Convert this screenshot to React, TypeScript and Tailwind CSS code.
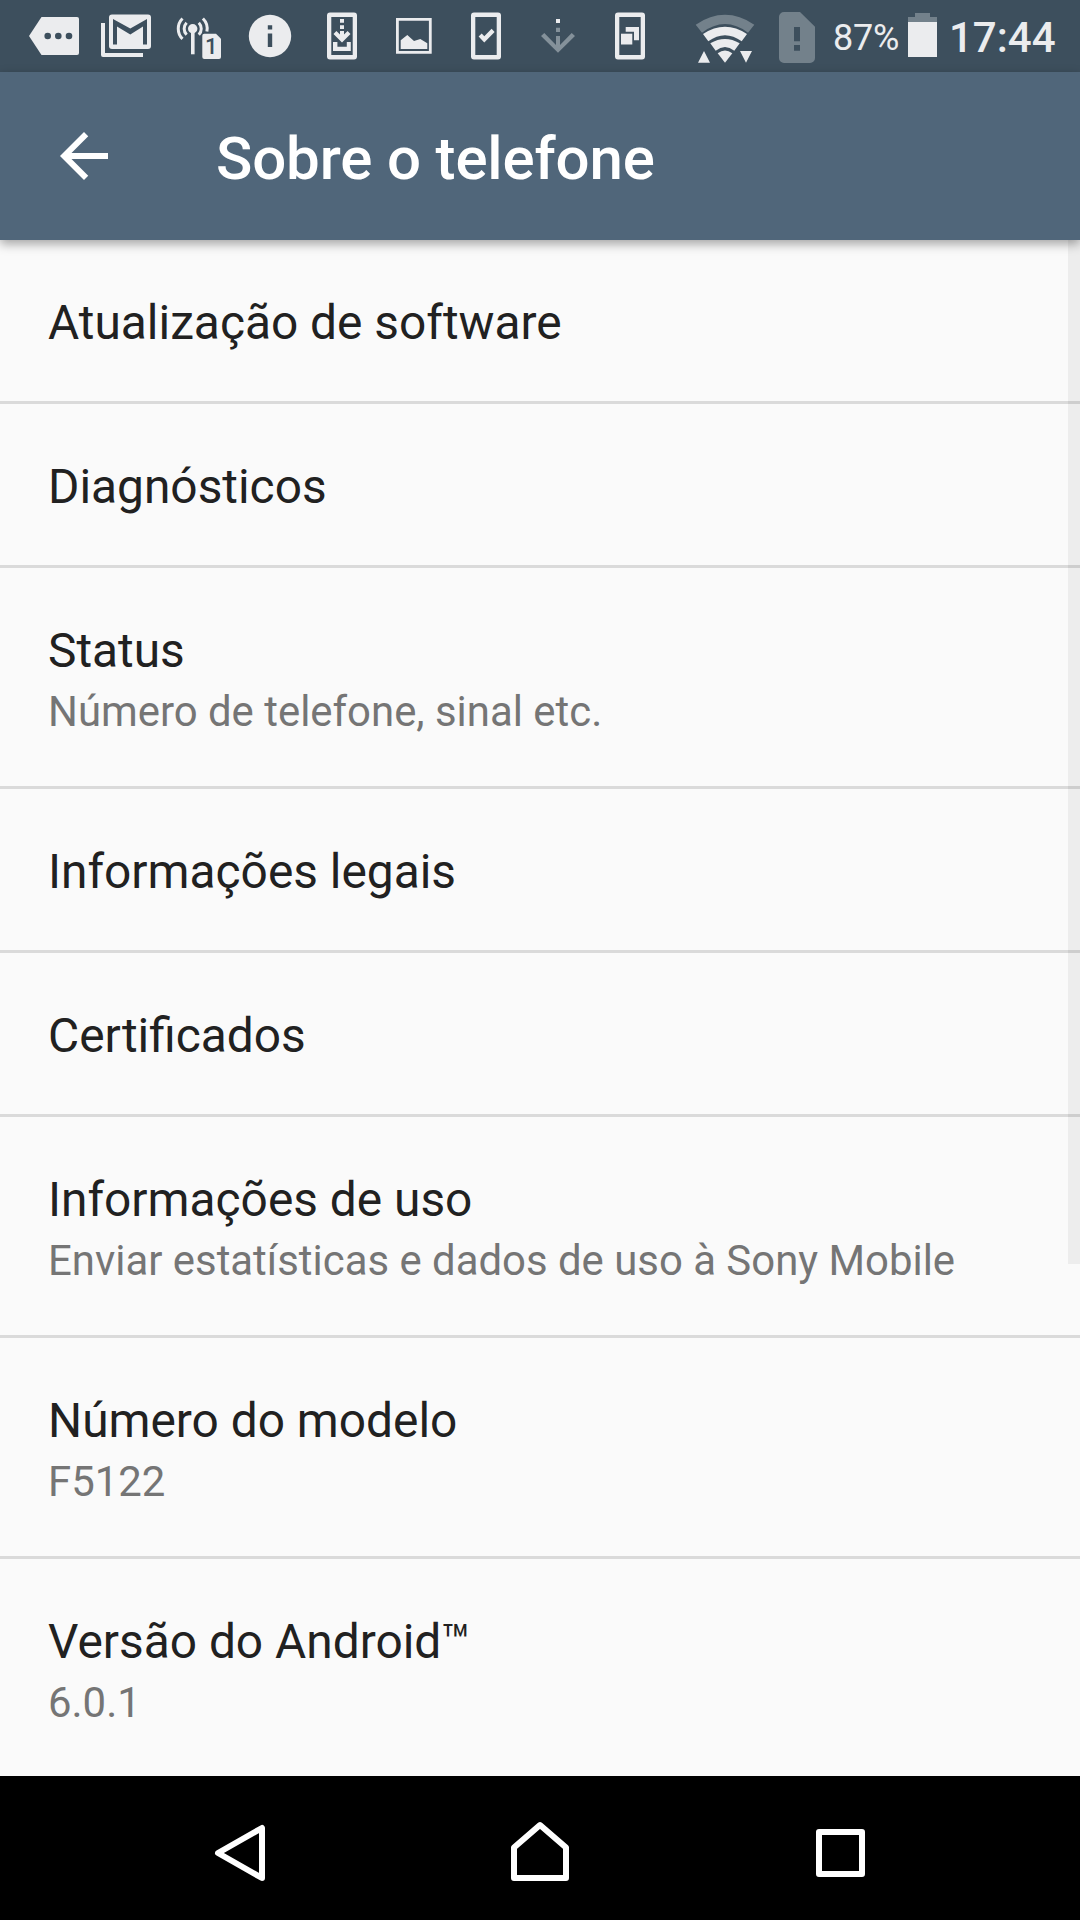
import React from "react";
import type { ReactNode } from "react";

const items = [
  { title: "Atualização de software" },
  { title: "Diagnósticos" },
  { title: "Status", summary: "Número de telefone, sinal etc." },
  { title: "Informações legais" },
  { title: "Certificados" },
  {
    title: "Informações de uso",
    summary: "Enviar estatísticas e dados de uso à Sony Mobile",
  },
  { title: "Número do modelo", summary: "F5122" },
  { title: "Versão do Android™", summary: "6.0.1" },
];

function Icon({ children }: { children: ReactNode }) {
  return (
    <svg viewBox="0 0 72 72" className="size-[72px] shrink-0 fill-current">
      {children}
    </svg>
  );
}

// phone outline shared by several notifications
function PhoneFrame() {
  return (
    <path
      fillRule="evenodd"
      d="M24 12.5h24a3 3 0 0 1 3 3v41a3 3 0 0 1-3 3H24a3 3 0 0 1-3-3v-41a3 3 0 0 1 3-3zM25.3 17v38h21.4V17z"
    />
  );
}

function StatusBar() {
  return (
    <div className="flex h-[72px] items-center bg-[#3d4f5d] pl-[18px] text-[#ebecee]">
      <Icon>
        <path d="M23.5 17H59a2 2 0 0 1 2 2v34a2 2 0 0 1-2 2H23.5L11 36z" />
        <g className="fill-[#3d4f5d]">
          <circle cx="29.7" cy="36" r="3.3" />
          <circle cx="40.3" cy="36" r="3.3" />
          <circle cx="51" cy="36" r="3.3" />
        </g>
      </Icon>
      <Icon>
        <path d="M11 23h4v30h38v4H13a2 2 0 0 1-2-2z" />
        <rect x="19" y="14.5" width="42" height="34.5" rx="3" />
        <path
          className="fill-[#3d4f5d]"
          d="M23 19l17.3 9.5L57 19v25.5h-4v-18l-12.7 8-13.3-8v18h-4z"
        />
      </Icon>
      <Icon>
        <circle cx="30.7" cy="28.7" r="4.7" />
        <path d="M29 30h3.6v24.3H29z" />
        <g className="fill-none stroke-current stroke-3">
          <path d="M24.6 22.7a8.6 8.6 0 0 0 0 12" />
          <path d="M36.8 22.7a8.6 8.6 0 0 1 0 12" />
          <path d="M20.5 18.5a14.4 14.4 0 0 0 0 20.4" />
          <path d="M40.9 18.5a14.4 14.4 0 0 1 4 13" />
        </g>
        <path d="M42.3 33.7H54l5 5V57a2 2 0 0 1-2 2H42.3a2 2 0 0 1-2-2V35.7a2 2 0 0 1 2-2z" />
        <text x="43" y="54.4" className="fill-[#3d4f5d] text-[22px] font-medium">
          1
        </text>
      </Icon>
      <Icon>
        <circle cx="36" cy="36" r="21.2" />
        <path
          className="fill-[#3d4f5d]"
          d="M33.8 25.2h4.4v4.4h-4.4zM33.8 33.6h4.4V47h-4.4z"
        />
      </Icon>
      <Icon>
        <PhoneFrame />
        <path d="M34 19h4v3.8h-4zM34 25.3h4V29h-4z" />
        <path d="M34 31h4v3.6l3.6-3.6 2.9 3L36 42.4 27.5 34l2.9-3 3.6 3.6z" />
        <path d="M27 42h4.4v4.7h9.4V42h4v9H27z" />
      </Icon>
      <Icon>
        <path fillRule="evenodd" d="M18 18h35.7v35.7H18zM20.8 20.8v30.1h30.1V20.8z" />
        <path d="M22.7 40.3l6.6-5.3 6.7 6 6.3-2 7 4.3V49H22.7z" />
      </Icon>
      <Icon>
        <PhoneFrame />
        <path d="M28.6 36.6l5.7 5.8L44.6 32l-3-3.2-7.3 7.5-2.6-2.7z" />
      </Icon>
      <Icon>
        <path d="M34 19h4v4h-4z" />
        <path
          className="fill-[#84919a]"
          d="M34 27.7h4V32h-4zM34 36h4v9l11.7-12 3.3 2.9-17 16.9-17-16.9 3.3-2.9L34 45z"
        />
      </Icon>
      <Icon>
        <PhoneFrame />
        <path d="M31.7 27H45v13.3h-5v-8.6h-8.3z" />
        <path d="M27 33.7h11.3v10.8H27z" />
      </Icon>

      <div className="ml-6 flex items-center">
        <Icon>
          <path
            className="fill-[#73818b]"
            d="M5.7 24.7Q35 5 64.3 24.7L58 32.7Q35 15.5 12 32.7z"
          />
          <path d="M13 34Q35 19.5 57 34l-5.3 7.3Q35 29 18.3 41.3z" />
          <path d="M20.3 43.3Q35 34.5 49.7 43.3l-5.4 7.4Q35 43.5 25.7 50.7z" />
          <path d="M27.7 53.3Q35 47.7 42.3 53.3L35 62.8z" />
          <path d="M8 62.8h12L14 51zM50 51h12l-6 11.8z" />
        </Icon>
        <Icon>
          <path
            fillRule="evenodd"
            className="fill-[#73818b]"
            d="M22 12h16l15 14.7V58a5 5 0 0 1-5 5H22a5 5 0 0 1-5-5V17a5 5 0 0 1 5-5zM32 27v14.3h6V27zM32 45v5.8h6V45z"
          />
        </Icon>
        <span className="-ml-px w-[75px] pt-[3px] text-[36px] leading-none tracking-[-0.2px]">
          87%
        </span>
        <svg viewBox="0 0 29 72" className="h-[72px] w-[29px] shrink-0 fill-current">
          <path className="fill-[#73818b]" d="M7 13h15v4h7v5H0v-5h7z" />
          <path d="M0 22h29v35H0z" />
        </svg>
        <span className="ml-3 pt-[3px] text-[42px] leading-none font-medium">
          17:44
        </span>
      </div>
    </div>
  );
}

function Toolbar() {
  return (
    <header className="relative z-10 flex h-[168px] items-center bg-[#50667a] pl-12 text-white shadow-[0_4px_10px_rgba(0,0,0,0.35)]">
      <svg viewBox="0 0 24 24" className="size-[72px] fill-current">
        <path d="M20 11H7.83l5.59-5.59L12 4l-8 8 8 8 1.41-1.41L7.83 13H20v-2z" />
      </svg>
      <h1 className="ml-24 pt-1.5 text-[60px] leading-none font-medium tracking-[-0.15px]">
        Sobre o telefone
      </h1>
    </header>
  );
}

function NavigationBar() {
  return (
    <nav className="flex h-36 items-center bg-black px-[90px] text-white">
      <div className="flex w-[300px] justify-center">
        <svg viewBox="0 0 72 72" className="size-[72px] fill-none stroke-current stroke-6">
          <path strokeLinejoin="round" d="M14 41l44-25v50z" />
        </svg>
      </div>
      <div className="flex w-[300px] justify-center">
        <svg viewBox="0 0 72 72" className="size-[72px] fill-none stroke-current stroke-6">
          <path strokeLinejoin="round" d="M36 13l26 22.5V66H10V35.5z" />
        </svg>
      </div>
      <div className="flex w-[300px] justify-center">
        <svg viewBox="0 0 72 72" className="size-[72px] fill-none stroke-current stroke-6">
          <path strokeLinejoin="round" d="M15 20h43v42H15z" />
        </svg>
      </div>
    </nav>
  );
}

export default function App() {
  return (
    <div className="flex h-[1920px] w-[1080px] flex-col overflow-hidden bg-[#fafafa] font-[Roboto,sans-serif]">
      <StatusBar />
      <Toolbar />
      <main className="relative min-h-0 flex-1 overflow-hidden">
        {items.map((item) => (
          <div
            key={item.title}
            className={`border-b-3 border-[#dadada] px-12 pt-[51px] ${
              item.summary ? "h-[221px]" : "h-[164px]"
            }`}
          >
            <div className="text-[47.85px] leading-[64px] text-[#212121]">
              {item.title}
            </div>
            {item.summary && (
              <div className="text-[41.9px] leading-[57px] text-[#757575]">
                {item.summary}
              </div>
            )}
          </div>
        ))}
        <div className="absolute top-0 right-0 h-[1024px] w-3 bg-black/5" />
      </main>
      <NavigationBar />
    </div>
  );
}
